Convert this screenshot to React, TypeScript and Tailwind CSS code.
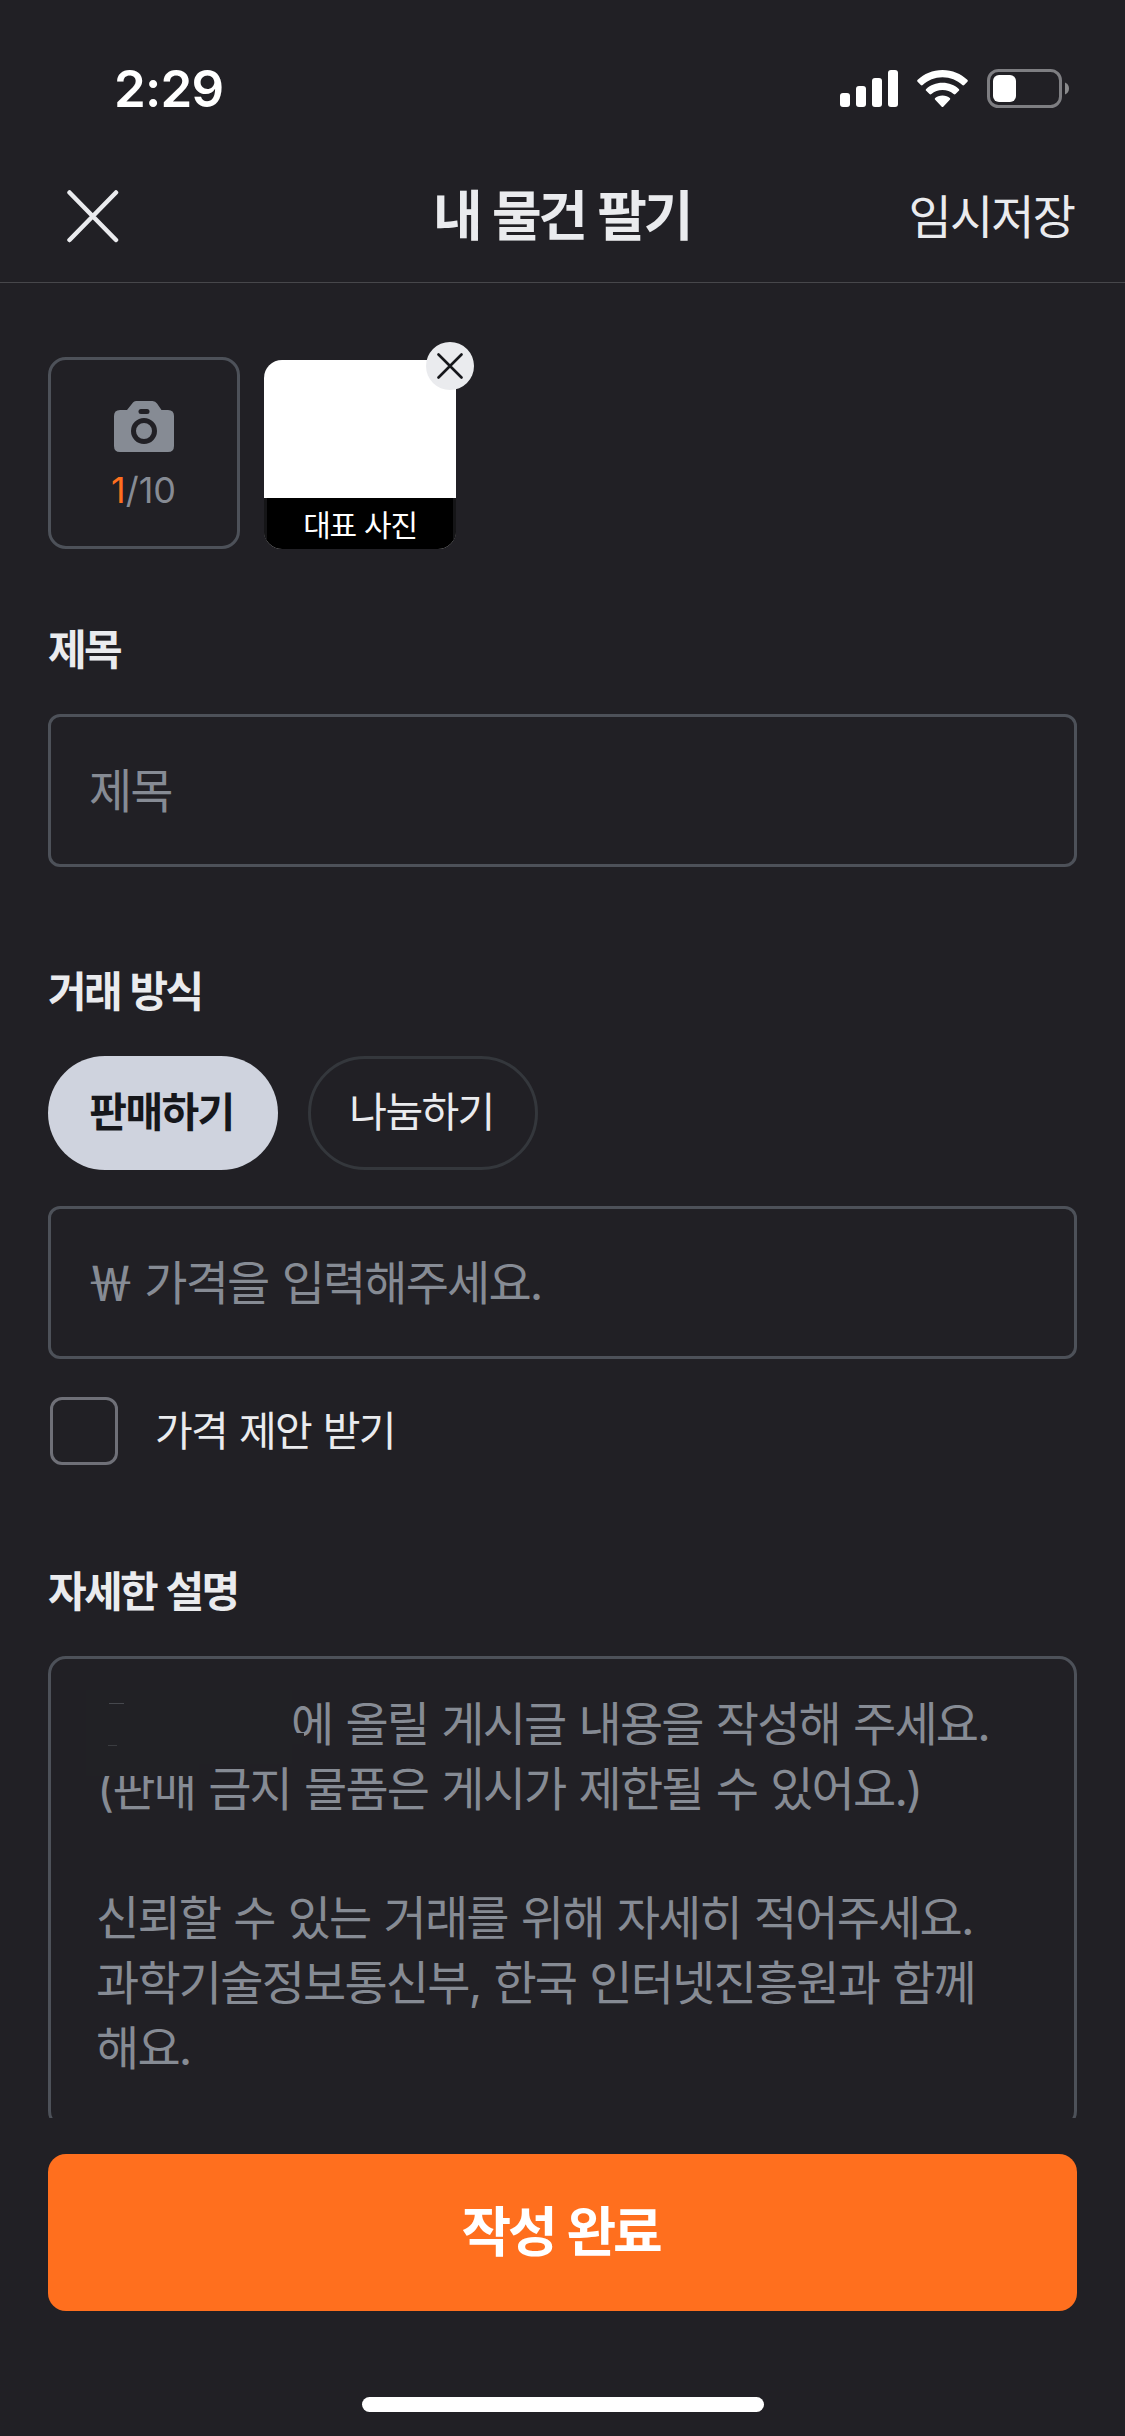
import { useState } from 'react'
import type { ReactNode } from 'react'

const PLACEHOLDER_TOP = [
  '에 올릴 게시글 내용을 작성해 주세요.',
  '(판매 금지 물품은 게시가 제한될 수 있어요.)',
]

const PLACEHOLDER_BOTTOM = [
  '신뢰할 수 있는 거래를 위해 자세히 적어주세요.',
  '과학기술정보통신부, 한국 인터넷진흥원과 함께',
  '해요.',
]

function StatusBar() {
  return (
    <div className="flex h-[177px] shrink-0 items-start justify-between pl-[114px] pr-[56px] pt-[69px]">
      <span className="text-[51px] font-semibold leading-[39px] tracking-[-0.015em] text-white">2:29</span>
      <div className="flex items-start">
        <svg width="58" height="39" viewBox="0 0 58 39" fill="#fff">
          <rect x="0" y="24" width="10" height="14" rx="3" />
          <rect x="16" y="17" width="10" height="21" rx="3" />
          <rect x="32" y="9" width="10" height="29" rx="3" />
          <rect x="48" y="1" width="10" height="37" rx="3" />
        </svg>
        <svg className="ml-[19px]" width="51" height="39" viewBox="0 0 51 39" fill="#fff">
          <path d="M25.5 1C35.4 1 44 4.800 50.300 10.800C51 11.500 51 12.200 50.400 12.800L47.200 16C46.600 16.600 45.900 16.600 45.300 16C40 11.200 33.200 8.300 25.500 8.300S11 11.200 5.700 16C5.100 16.600 4.400 16.600 3.800 16L.6 12.800C0 12.200 0 11.500 .7 10.800C7 4.800 15.600 1 25.500 1Z" />
          <path d="M25.500 13.700C31.900 13.700 37.600 16 41.800 19.900C42.400 20.500 42.400 21.200 41.800 21.800L38.500 25.100C37.900 25.700 37.300 25.700 36.600 25.100C33.600 22.500 29.700 21 25.500 21S17.400 22.500 14.400 25.100C13.700 25.700 13.100 25.700 12.500 25.100L9.200 21.800C8.600 21.200 8.600 20.500 9.200 19.900C13.400 16 19.100 13.700 25.500 13.700Z" />
          <path d="M25.500 26.400C28.500 26.400 31.200 27.400 32.800 29C33.400 29.600 33.400 30.200 32.800 30.800L26.500 37.400C25.800 38.100 25.200 38.100 24.500 37.400L18.200 30.800C17.600 30.200 17.600 29.600 18.200 29C19.800 27.400 22.500 26.400 25.500 26.400Z" />
        </svg>
        <svg className="ml-[19px]" width="82" height="39" viewBox="0 0 82 39">
          <rect x="1.500" y="1.500" width="72" height="36" rx="10" fill="none" stroke="#7e7e82" strokeWidth="3" />
          <rect x="6" y="6" width="23" height="27" rx="6" fill="#fff" />
          <path d="M78 13.500C80.500 14.500 82 16.800 82 19.500S80.500 24.500 78 25.500Z" fill="#8a8a8c" />
        </svg>
      </div>
    </div>
  )
}

function Header() {
  return (
    <header className="grid h-[106px] shrink-0 grid-cols-3 items-start border-b border-[#47474b] px-[48px]">
      <button className="ml-[18px] mt-[12px] w-[54px]" aria-label="닫기">
        <svg width="54" height="54" viewBox="0 0 54 54" stroke="#eaebee" strokeWidth="4.500" strokeLinecap="round">
          <path d="M3.500 3.500L50 51M50 3.500L3.500 51" />
        </svg>
      </button>
      <h1 className="mt-[4px] whitespace-nowrap pr-[2px] text-center text-[54px] font-bold leading-[72px] tracking-[-0.062em] text-[#eaebee] [word-spacing:0.06em]">
        내 물건 팔기
      </h1>
      <button className="mt-[4px] pr-[3px] text-right text-[47px] leading-[72px] tracking-[-0.04em] text-[#eaebee]">
        임시저장
      </button>
    </header>
  )
}

function PhotoPicker() {
  return (
    <div className="flex gap-6">
      <button className="flex h-[192px] w-[192px] flex-col items-center rounded-[18px] border-[3px] border-[#4d5159] pt-[41px]">
        <svg width="60" height="51" viewBox="0 0 60 51">
          <path
            fill="#868b94"
            d="M19 1.500Q20 0 22 0H38.500Q41.500 0 43 2.500L47.500 9H54Q60 9 60 15V45Q60 51 54 51H6Q0 51 0 45V15Q0 9 6 9H13Z"
          />
          <rect x="24.500" y="8" width="11" height="5" rx="2.500" fill="#212025" />
          <circle cx="30" cy="30" r="10.500" fill="none" stroke="#212025" strokeWidth="5" />
        </svg>
        <span className="mt-4 pr-px text-[36px] leading-[44px] text-[#868b94]">
          <span className="text-[#ff6f1e]">1</span>/10
        </span>
      </button>
      <div className="relative h-[192px] w-[192px] pt-[3px]">
        <div className="flex h-[189px] flex-col overflow-hidden rounded-[18px] bg-white">
          <div className="mt-auto h-[51px] border-x-[3px] border-[#151517] bg-black text-center text-[30px] leading-[54px] tracking-[-0.04em] text-white [word-spacing:0.03em]">
            대표 사진
          </div>
        </div>
        <button
          className="absolute -right-[18px] -top-[15px] flex h-12 w-12 items-center justify-center rounded-full bg-[#eaebee]"
          aria-label="사진 삭제"
        >
          <svg width="26" height="26" viewBox="0 0 26 26" stroke="#16171b" strokeWidth="2.600" strokeLinecap="round">
            <path d="M1.500 1.500L24.500 24.500M24.500 1.500L1.500 24.500" />
          </svg>
        </button>
      </div>
    </div>
  )
}

function Label({ children }: { children: ReactNode }) {
  return (
    <h2 className="text-[42px] font-bold leading-[60px] tracking-[-0.062em] text-[#eaebee] [word-spacing:0.05em]">
      {children}
    </h2>
  )
}

function Field({ children }: { children: ReactNode }) {
  return (
    <div className="flex h-[153px] items-center rounded-xl border-[3px] border-[#4d5159] pl-[38px] text-[47px] leading-[64px] tracking-[-0.04em] text-[#868b94] [word-spacing:0.04em]">
      <p className="whitespace-nowrap">{children}</p>
    </div>
  )
}

function TradeType() {
  const [type, setType] = useState('sell')
  const base = 'h-[114px] w-[230px] rounded-full pr-[3px] text-[41px] tracking-[-0.04em]'
  const on = 'bg-[#cfd3de] font-bold text-[#16171b]'
  const off = 'border-[3px] border-[#34373c] text-[#eaebee]'
  return (
    <div className="flex gap-[30px]">
      <button className={`${base} ${type === 'sell' ? on : off}`} onClick={() => setType('sell')}>
        판매하기
      </button>
      <button className={`${base} ${type === 'share' ? on : off}`} onClick={() => setType('share')}>
        나눔하기
      </button>
    </div>
  )
}

function Description() {
  return (
    <div className="relative h-[473px] rounded-[18px] border-[3px] border-[#4d5159] pl-[45px] pt-[33px] text-[47px] leading-[64.8px] tracking-[-0.039em] text-[#868b94] [word-spacing:0.035em]">
      <p className="whitespace-nowrap pl-[195px]">{PLACEHOLDER_TOP[0]}</p>
      <p className="whitespace-nowrap pl-px">{PLACEHOLDER_TOP[1]}</p>
      <p>&nbsp;</p>
      {PLACEHOLDER_BOTTOM.map((line) => (
        <p key={line} className="whitespace-nowrap">
          {line}
        </p>
      ))}
      {/* blanked-out area over the start of the first two lines */}
      <svg className="absolute left-[35px] top-[31px]" width="220" height="90" viewBox="0 0 220 90">
        <path d="M0 0H206V28Q206 38 209 42V43H218V54H206V74H113V86H0Z" fill="#212125" />
        <path d="M23 13.500H38" stroke="#46484d" strokeWidth="1" />
        <path d="M22 55.500H31" stroke="#3a3c40" strokeWidth="1" />
      </svg>
    </div>
  )
}

export default function App() {
  const [offer, setOffer] = useState(false)

  return (
    <div className="flex h-[2436px] w-[1125px] flex-col overflow-hidden bg-[#212025] font-['Inter','Noto_Sans_CJK_KR',sans-serif]">
      <StatusBar />
      <Header />
      <main className="h-[1835px] shrink-0 overflow-hidden px-12 pt-[74px]">
        <PhotoPicker />
        <section className="mt-[71px]">
          <Label>제목</Label>
          <div className="mt-[34px]">
            <Field>제목</Field>
          </div>
        </section>
        <section className="mt-[95px]">
          <Label>거래 방식</Label>
          <div className="mt-[34px]">
            <TradeType />
          </div>
          <div className="mt-9">
            <Field>
              <span className="-ml-[2px] -mr-px font-['Noto_Sans_CJK_KR'] font-medium leading-none">￦</span> 가격을 입력해주세요.
            </Field>
          </div>
          <button className="ml-[2px] mt-[38px] flex items-center" onClick={() => setOffer(!offer)}>
            <span className="h-[68px] w-[68px] rounded-xl border-[3px] border-[#6f7078]" />
            <span className="ml-[37px] text-[41px] leading-[60px] tracking-[-0.04em] text-[#eaebee] [word-spacing:0.045em]">
              가격 제안 받기
            </span>
          </button>
        </section>
        <section className="mt-[97px]">
          <Label>자세한 설명</Label>
          <div className="mt-[34px]">
            <Description />
          </div>
        </section>
      </main>
      <footer className="flex flex-1 flex-col items-center px-12 pt-9">
        <button className="h-[157px] w-full rounded-[18px] bg-[#ff6f1e] pr-[4px] text-[54px] font-bold tracking-[-0.06em] text-white [word-spacing:0.05em]">
          작성 완료
        </button>
        <div className="mt-[86px] h-[15px] w-[402px] rounded-full bg-white" />
      </footer>
    </div>
  )
}
